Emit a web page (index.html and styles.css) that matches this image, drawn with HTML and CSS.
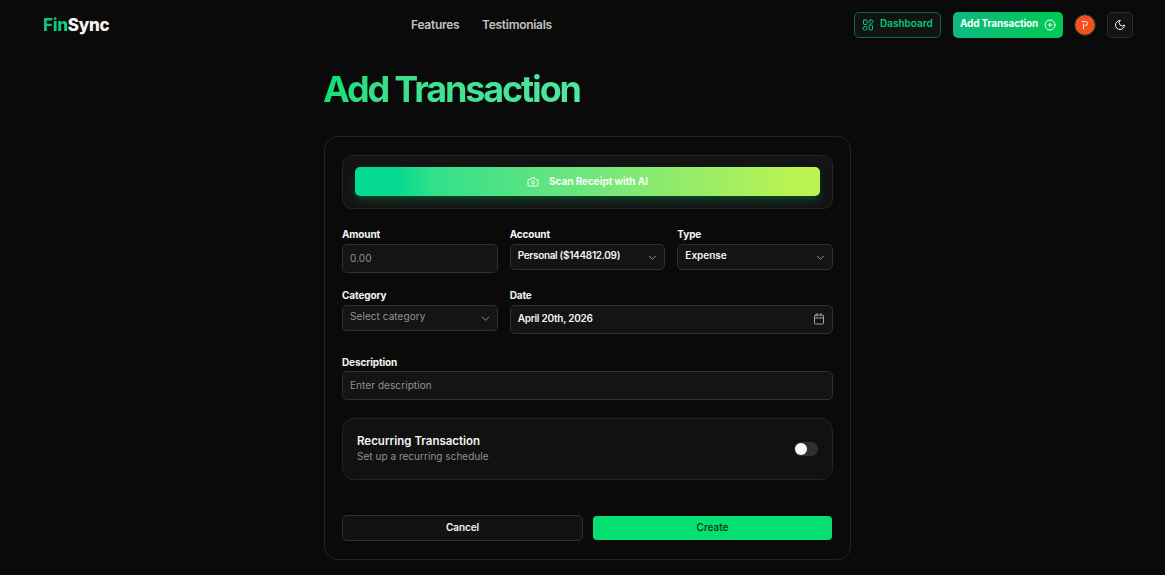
FILE: index.html
```html
<!DOCTYPE html>
<html lang="en">
<head>
    <meta charset="UTF-8">
    <meta name="viewport" content="width=device-width, initial-scale=1.0">
    <title>FinSync - Add Transaction</title>
    <link rel="stylesheet" href="styles.css">
</head>
<body>
    <header class="navbar">
        <a class="logo"><span class="logo-fin">Fin</span>Sync</a>
        <nav class="nav-links">
            <a class="link-features">Features</a>
            <a>Testimonials</a>
        </nav>
        <div class="nav-actions">
            <a class="btn-dashboard">
                <svg class="icon" width="12" height="12" viewBox="0 0 24 24"><rect x="3" y="2" width="7" height="9" rx="1"/><rect x="14" y="2" width="8" height="6" rx="3"/><rect x="2" y="15" width="8" height="7" rx="3"/><rect x="14" y="12" width="7" height="10" rx="2"/></svg>
                <span>Dashboard</span>
            </a>
            <a class="btn-add">
                <span>Add Transaction</span>
                <svg class="icon" width="12" height="12" viewBox="0 0 24 24"><circle cx="12" cy="12" r="10"/><path d="M8 12h8M12 8v8"/></svg>
            </a>
            <span class="avatar">
                <svg width="8" height="10" viewBox="0 0 8 10"><path d="M2.500 9V4M1 1.500h3.500a2 2 0 0 1 0 4H4"/></svg>
            </span>
            <button class="btn-theme">
                <svg class="icon" width="12" height="12" viewBox="0 0 24 24"><path d="M12 3a6 6 0 0 0 9 9 9 9 0 1 1-9-9Z"/></svg>
            </button>
        </div>
    </header>
    <main>
        <h1><span>Add Transaction</span></h1>
        <form class="card">
            <div class="scan-box">
                <button type="button" class="btn-scan">
                    <svg class="icon" width="12" height="12" viewBox="0 0 24 24"><path d="M14.5 4h-5L7 7H4a2 2 0 0 0-2 2v9a2 2 0 0 0 2 2h16a2 2 0 0 0 2-2V9a2 2 0 0 0-2-2h-3l-2.500-3z"/><circle cx="12" cy="13" r="3"/></svg>
                    <span>Scan Receipt with AI</span>
                </button>
            </div>
            <div class="fields">
                <div class="field">
                    <label for="amount">Amount</label>
                    <input id="amount" class="control" type="text" placeholder="0.00">
                </div>
                <div class="field">
                    <label>Account</label>
                    <div class="control select">
                        <span class="value-account">Personal ($144812.09)</span>
                        <svg class="chevron" width="11" height="11" viewBox="0 0 24 24"><path d="m5 9 7 7 7-7"/></svg>
                    </div>
                </div>
                <div class="field">
                    <label>Type</label>
                    <div class="control select">
                        <span>Expense</span>
                        <svg class="chevron" width="11" height="11" viewBox="0 0 24 24"><path d="m5 9 7 7 7-7"/></svg>
                    </div>
                </div>
                <div class="field">
                    <label>Category</label>
                    <div class="control select">
                        <span class="placeholder">Select category</span>
                        <svg class="chevron" width="11" height="11" viewBox="0 0 24 24"><path d="m5 9 7 7 7-7"/></svg>
                    </div>
                </div>
                <div class="field wide">
                    <label>Date</label>
                    <div class="control date">
                        <span>April 20th, 2026</span>
                        <svg class="icon" width="12" height="12" viewBox="0 0 24 24"><path d="M8 1v5M16 1v5M3 10h18"/><rect x="3" y="4" width="18" height="18" rx="2"/></svg>
                    </div>
                </div>
            </div>
            <div class="field description">
                <label for="description">Description</label>
                <input id="description" class="control" type="text" placeholder="Enter description">
            </div>
            <div class="recurring">
                <div>
                    <div class="recurring-title">Recurring Transaction</div>
                    <div class="recurring-text">Set up a recurring schedule</div>
                </div>
                <span class="switch"></span>
            </div>
            <div class="form-actions">
                <button type="button" class="btn-cancel">Cancel</button>
                <button type="button" class="btn-create">Create</button>
            </div>
        </form>
    </main>
</body>
</html>
```
FILE: styles.css
```css
* {
    box-sizing: border-box;
}

body {
    margin: 0;
    height: 575px;
    overflow: hidden;
    background: #0a0a0a;
    color: #f5f5f5;
    font-family: Inter, "Liberation Sans", sans-serif;
    font-size: 10px;
    font-weight: 600;
}

button, input {
    font: inherit;
    color: inherit;
    margin: 0;
}

svg {
    flex: none;
    fill: none;
    stroke: currentColor;
    stroke-linecap: round;
    stroke-linejoin: round;
}

.icon {
    stroke-width: 2;
}

span {
    white-space: nowrap;
}

/* navbar */
.navbar {
    display: grid;
    grid-template-columns: 368px 1fr auto;
    align-items: center;
    height: 49px;
    padding: 0 32px 0 43px;
}

.logo {
    font-size: 17px;
    font-weight: 800;
    letter-spacing: -0.25px;
}

.logo-fin {
    background: linear-gradient(90deg, #10b981, #05df72);
    background-clip: text;
    -webkit-background-clip: text;
    color: transparent;
}

.nav-links {
    display: flex;
    gap: 21px;
    padding-bottom: 1px;
    font-size: 12px;
    color: #c2c2c2;
    letter-spacing: -0.28px;
}

.link-features {
    width: 50px;
}

.nav-actions {
    display: flex;
    align-items: center;
}

.btn-dashboard, .btn-add {
    display: flex;
    align-items: center;
    height: 26px;
    border-radius: 5px;
}

.btn-dashboard {
    width: 87px;
    padding-left: 7px;
    gap: 6px;
    margin-right: 12px;
    border: 1px solid #0b6b46;
    background: #121413;
    color: #05c878;
}

.btn-add {
    width: 110px;
    padding-left: 7px;
    gap: 6px;
    background: linear-gradient(90deg, #10b981, #00c951);
    color: #f4fff8;
    font-weight: 700;
    letter-spacing: -0.15px;
}

.btn-dashboard span, .btn-add span {
    padding-bottom: 3px;
}

.avatar {
    display: flex;
    align-items: center;
    justify-content: center;
    width: 22px;
    height: 22px;
    margin: 0 11px;
    border: 1px solid #12402a;
    border-radius: 50%;
    background: #f4511e;
    background-clip: padding-box;
    color: #ffe9e0;
}

.btn-theme {
    display: flex;
    align-items: center;
    justify-content: center;
    width: 26px;
    height: 26px;
    padding: 0;
    border: 1px solid #2c2c2c;
    border-radius: 5px;
    background: #131313;
}

/* page */
main {
    width: 527px;
    margin-left: 324px;
}

h1 {
    margin: 0 0 0 -1px;
    height: 87px;
    padding-top: 19px;
    font-size: 36px;
    line-height: 42px;
    font-weight: 700;
    letter-spacing: -2.15px;
}

h1 span {
    background: linear-gradient(120deg, #05df72, #38df88 25%, #4fe8a4);
    background-clip: text;
    -webkit-background-clip: text;
    color: transparent;
}

.card {
    height: 424px;
    padding: 18px 17px;
    border: 1px solid #242424;
    border-radius: 14px;
}

.scan-box {
    height: 54px;
    padding: 11px 12px;
    border: 1px solid #232524;
    border-radius: 10px;
    background: #131313;
}

.btn-scan {
    display: flex;
    align-items: center;
    justify-content: center;
    gap: 10px;
    width: 465px;
    height: 29px;
    padding: 0;
    border: 0;
    border-radius: 5px;
    background: linear-gradient(90deg, #05da91 9%, #32e08a 17%, #72e57e 50%, #bbf451 96%);
    box-shadow: 0 5px 9px -1px rgba(5, 150, 75, 0.4);
    color: #f6fff4;
    font-weight: 700;
    letter-spacing: -0.05px;
}

.btn-scan span {
    padding-bottom: 1px;
}

.fields {
    display: grid;
    grid-template-columns: repeat(3, 1fr);
    gap: 17px 12px;
    margin-top: 20px;
}

.field {
    display: flex;
    flex-direction: column;
    height: 44px;
}

.field label {
    height: 15px;
    line-height: 11px;
    font-weight: 700;
    letter-spacing: -0.13px;
}

.wide {
    grid-column: span 2;
}

.control {
    display: flex;
    align-items: center;
    justify-content: space-between;
    width: 100%;
    height: 29px;
    padding: 0 7px 2px;
    border: 1px solid #303030;
    border-radius: 5px;
    background: #141414;
}

.control::placeholder, .placeholder {
    color: #929292;
    font-weight: 400;
    letter-spacing: 0.07px;
    opacity: 1;
}

.select {
    height: 26px;
    padding: 0 6px 0 7px;
}

.select span {
    padding-bottom: 4px;
}

.value-account {
    letter-spacing: -0.32px;
}

.chevron {
    stroke: #9a9a9a;
    stroke-width: 2;
}

.date {
    padding: 0 7px;
    letter-spacing: -0.25px;
}

.date span {
    padding-bottom: 3px;
}

.date svg {
    color: #a0a0a0;
    margin-bottom: 1px;
}

.description {
    margin-top: 22px;
}

.description label {
    line-height: 13px;
}

.recurring {
    display: flex;
    align-items: center;
    justify-content: space-between;
    height: 62px;
    margin-top: 18px;
    padding: 0 14px;
    border: 1px solid #242424;
    border-radius: 12px;
    background: #111111;
}

.recurring-title {
    font-size: 11.5px;
    line-height: 15px;
}

.recurring-text {
    padding-bottom: 1px;
    line-height: 15px;
    font-weight: 400;
    color: #929292;
    letter-spacing: 0.03px;
}

.switch {
    width: 24px;
    height: 14px;
    padding: 1px;
    border-radius: 7px;
    background: #303030;
}

.switch::before {
    content: "";
    display: block;
    width: 12px;
    height: 12px;
    border-radius: 50%;
    background: #f5faf7;
}

.form-actions {
    display: flex;
    align-items: center;
    gap: 10px;
    margin-top: 35px;
}

.btn-cancel {
    width: 241px;
    height: 26px;
    padding: 0 0 2px;
    border: 1px solid #303030;
    border-radius: 5px;
    background: #131313;
    letter-spacing: -0.1px;
}

.btn-create {
    width: 239px;
    height: 24px;
    padding: 0 0 2px;
    border: 0;
    border-radius: 4px;
    background: #05df72;
    color: #07351d;
    font-weight: 500;
}
```
